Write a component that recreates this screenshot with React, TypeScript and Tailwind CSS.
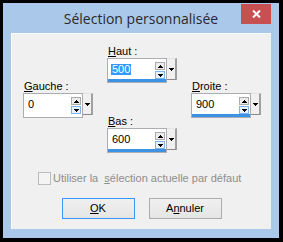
import type { ReactNode } from "react"

const ui = { fontFamily: '"Liberation Sans", Arial, sans-serif' }

function Tri({ down }: { down?: boolean }) {
  return (
    <svg width="5" height="3" viewBox="0 0 5 3" shapeRendering="crispEdges">
      <path d={down ? "M0 0H5L2.5 3Z" : "M0 3H5L2.5 0Z"} fill="#000" />
    </svg>
  )
}

function Spin({
  label,
  value,
  selected,
  bar,
}: {
  label: ReactNode
  value: string
  selected?: boolean
  bar?: boolean
}) {
  return (
    <div className="flex flex-col w-[70px]">
      <div className="h-[13px] text-[11px] leading-[13px] text-black pl-[1px]">{label}</div>
      <div className="flex items-start">
        {/* text field with spin arrows */}
        <div className="w-[60px] h-[25px] border border-[#abadb3] bg-white flex flex-col">
          <div className="h-[20px] flex items-start pl-[3px] pr-[1px]">
            <span
              className={
                "mt-[5px] text-[11px] leading-[11px] px-[1px] " +
                (selected ? "bg-[#3399ff] text-white" : "text-black")
              }
            >
              {value}
            </span>
            <div className="ml-auto mt-[3px] flex flex-col gap-[1px]">
              <div className="w-[10px] h-[8px] border border-[#acacac] bg-[#ececec] flex items-center justify-center">
                <Tri />
              </div>
              <div className="w-[10px] h-[8px] border border-[#7eb4ea] bg-[#e5f1fb] flex items-center justify-center">
                <Tri down />
              </div>
            </div>
          </div>
          <div className={"h-[3px] mt-auto " + (bar ? "bg-[#3a93e6]" : "bg-white")} />
        </div>
        {/* dropdown */}
        <div className="w-[10px] h-[22px] bg-[#f0f0f0] border-t border-[#e3e3e3] border-r-2 border-r-[#a0a0a0] border-b border-b-[#8a8a8a] flex items-center justify-center">
          <Tri down />
        </div>
      </div>
    </div>
  )
}

export default function App() {
  return (
    <div className="w-[283px] h-[242px] bg-black pt-[3px] pl-[3px]" style={ui}>
      <div className="w-[276px] h-[235px] bg-[#aac8ea] flex flex-col px-[8px] pb-[9px]">
        {/* title bar */}
        <div className="h-[30px] relative flex items-center justify-center">
          <span
            className="text-[14px] text-[#2a2a2a] mt-[1px]"
            style={{ fontFamily: '"Open Sans", "Noto Sans", sans-serif' }}
          >
            Sélection personnalisée
          </span>
          <div className="absolute right-0 top-[1px] w-[30px] h-[20px] bg-[#c75050] flex items-center justify-center">
            <svg width="9" height="8" viewBox="0 0 9 8">
              <path d="M1 0.5L8 7.5M8 0.5L1 7.5" stroke="#fff" strokeWidth="2" />
            </svg>
          </div>
        </div>

        {/* client area */}
        <div className="flex-1 bg-[#f0f0f0] border-t border-l border-[#fbfbfb] flex flex-col pt-[11px]">
          <div className="flex gap-[14px] pl-[11px]">
            <div className="mt-[35px]">
              <Spin
                label={
                  <>
                    <span className="underline">G</span>auche :
                  </>
                }
                value="0"
              />
            </div>
            <div className="flex flex-col gap-[32px]">
              <Spin
                label={
                  <>
                    <span className="underline">H</span>aut :
                  </>
                }
                value="500"
                selected
                bar
              />
              <Spin
                label={
                  <>
                    <span className="underline">B</span>as :
                  </>
                }
                value="600"
                bar
              />
            </div>
            <div className="mt-[35px]">
              <Spin
                label={
                  <>
                    <span className="underline">D</span>roite :
                  </>
                }
                value="900"
                bar
              />
            </div>
          </div>

          {/* checkbox */}
          <div className="mt-[19px] ml-[26px] flex items-center gap-[2px] h-[13px]">
            <div className="w-[13px] h-[13px] border border-[#bcbcbc] bg-[#f4f4f4]" />
            <span className="text-[11px] leading-[13px] text-[#8d8d8d] whitespace-pre">
              {"Utiliser la  "}
              <span className="underline">s</span>
              {"élection actuelle par défaut"}
            </span>
          </div>

          {/* buttons */}
          <div className="mt-[13px] flex justify-center gap-[14px]">
            <button className="w-[73px] h-[21px] border border-[#3399ff] bg-gradient-to-b from-[#f0f0f0] to-[#e5e5e5] text-[11px] text-black">
              <span className="underline">O</span>K
            </button>
            <button className="w-[73px] h-[21px] border border-[#acacac] bg-gradient-to-b from-[#f0f0f0] to-[#e5e5e5] text-[11px] text-black">
              A<span className="underline">n</span>nuler
            </button>
          </div>
        </div>
      </div>
    </div>
  )
}
